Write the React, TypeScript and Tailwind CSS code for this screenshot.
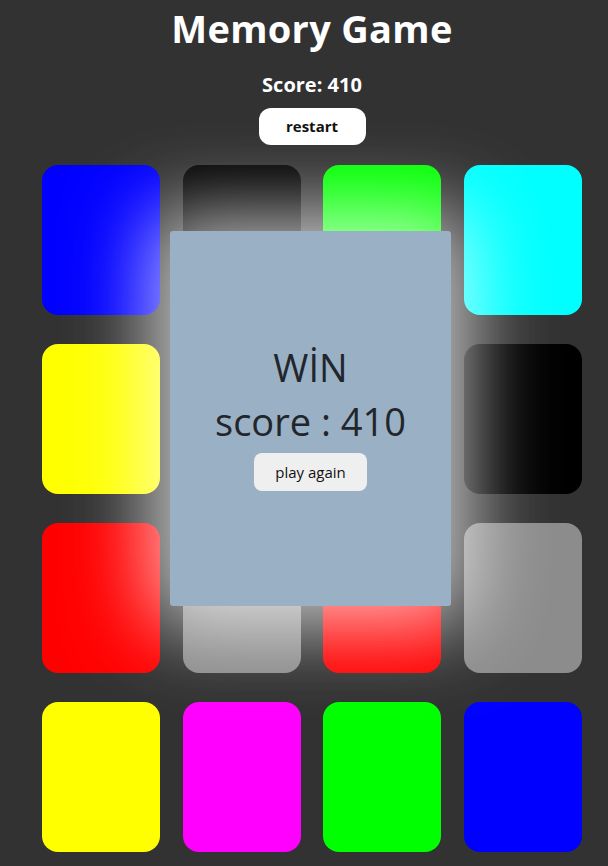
const cards = [
    'bg-[#0000ff]', 'bg-[#000000]', 'bg-[#00ff00]', 'bg-[#00ffff]',
    'bg-[#ffff00]', 'bg-[#00ffff]', 'bg-[#ff00ff]', 'bg-[#000000]',
    'bg-[#ff0000]', 'bg-[#8c8c8c]', 'bg-[#ff0000]', 'bg-[#8c8c8c]',
    'bg-[#ffff00]', 'bg-[#ff00ff]', 'bg-[#00ff00]', 'bg-[#0000ff]',
];

const App = () => {
    const score = 410;

    return (
        <div className="min-h-screen bg-[#323232] pl-4 font-['Open_Sans',sans-serif]">
            <div className="flex flex-col items-center">
                <h1 className="mt-[6px] text-[38px] font-bold leading-[1.2] text-white tracking-[0.3px]">
                    Memory Game
                </h1>
                <p className="mt-[20px] text-[20px] font-bold leading-[1.3] text-white">
                    Score: {score}
                </p>
                <button className="mt-[10px] w-[107px] h-[37px] rounded-xl bg-white text-[15px] font-bold text-[#111]">
                    restart
                </button>

                {/* Board */}
                <div className="relative mt-[20px] mb-[14px] grid w-[540px] grid-cols-4 gap-x-[22.67px] gap-y-[29px]">
                    {cards.map((color, i) => (
                        <div key={i} className={`h-[150px] rounded-2xl ${color}`} />
                    ))}

                    {/* Win modal */}
                    <div className="absolute left-[128px] top-[66px] flex h-[375px] w-[281px] flex-col items-center justify-center rounded-[3px] bg-[#9ab0c5] pb-[4px] text-[#22262b] shadow-[0_0_80px_20px_rgba(255,255,255,0.72)]">
                        <div className="text-[38px] leading-[1.4]">WİN</div>
                        <div className="text-[38px] leading-[1.4]">score : {score}</div>
                        <button className="mt-[5px] h-[38px] w-[113px] rounded-lg bg-[#efefef] text-[15px] text-[#111]">
                            play again
                        </button>
                    </div>
                </div>
            </div>
        </div>
    );
};

export default App;
